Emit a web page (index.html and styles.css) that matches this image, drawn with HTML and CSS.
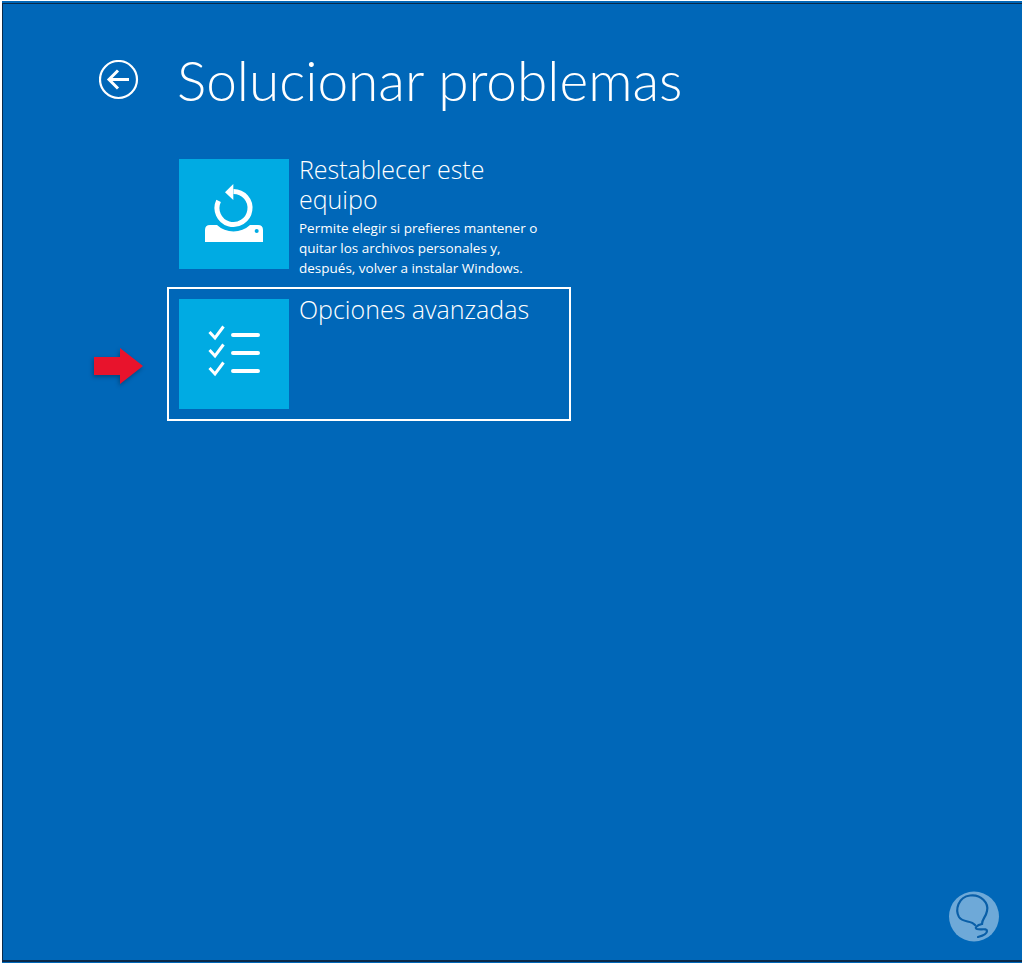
FILE: index.html
```
<!DOCTYPE html>
<html lang="es">
<head>
<meta charset="utf-8">
<title>Solucionar problemas</title>
<link rel="stylesheet" href="styles.css">
</head>
<body>
<main class="screen">
  <header class="head">
    <svg class="back" width="40" height="40" viewBox="0 0 40 40" fill="none" stroke="#fff">
      <circle cx="19.5" cy="19.5" r="18.5" stroke-width="2.2"/>
      <path d="M10 19.5H30M19 10.5L10 19.5L19 28.5" stroke-width="3"/>
    </svg>
    <h1 class="title">Solucionar problemas</h1>
  </header>
  <section class="tiles">
    <div class="option">
      <div class="tile">
        <svg width="110" height="110" viewBox="0 0 110 110">
          <path d="M26 71Q26 66 31 66H38A24 24 0 0 0 71 66H79Q84 66 84 71V83H26Z" fill="#fff"/>
          <circle cx="77.700" cy="72" r="2" fill="#00abe3"/>
          <path d="M54.500 32.500A16.500 16.500 0 1 1 39.600 41.900" fill="none" stroke="#fff" stroke-width="5"/>
          <path d="M54.300 25V41L46 33.300Z" fill="#fff"/>
        </svg>
      </div>
      <div class="text">
        <h2 class="name">Restablecer este equipo</h2>
        <p class="desc">Permite elegir si prefieres mantener o quitar los archivos personales y, después, volver a instalar Windows.</p>
      </div>
    </div>
    <div class="option focused">
      <div class="tile">
        <svg width="110" height="110" viewBox="0 0 110 110" fill="none" stroke="#fff">
          <path d="M30.500 33L36 39L44.500 27.500M30.500 51L36 57L44.500 45.500M30.500 69L36 75L44.500 63.500" stroke-width="3"/>
          <path d="M54 36H79M54 54H79M54 72H79" stroke-width="4" stroke-linecap="round"/>
        </svg>
      </div>
      <div class="text">
        <h2 class="name">Opciones avanzadas</h2>
      </div>
    </div>
  </section>
  <svg class="arrow" width="54" height="38" viewBox="0 0 54 38">
    <path d="M1 10H27V1L50 19L27 37V28H1Z" fill="#e8132c"/>
  </svg>
  <svg class="logo" width="52" height="52" viewBox="0 0 52 52">
    <circle cx="25" cy="25.500" r="25" fill="#6ea9d8"/>
    <path d="M26 34C22 29 14 32 10 26C6 19 9 6 21 4.500C32 3 40 12 38 20C37 26 33 28 33 33C28 34 25 37 28 38C32 39 38 37 38 40C38 43 33 45 29 46" fill="none" stroke="#0a5fa8" stroke-width="2.200" stroke-linecap="round"/>
  </svg>
</main>
</body>
</html>
```
FILE: styles.css
```
* { box-sizing: border-box; }
html, body { margin: 0; padding: 0; height: 100%; }
body { background: #fff; overflow: hidden; }
.screen {
  position: relative;
  width: 1022px;
  height: 962px;
  margin-top: 1px;
  background: #0067b8;
  border-left: 2px solid #fff;
  font-family: "Open Sans", "Liberation Sans", sans-serif;
  color: #fff;
}
.screen::before {
  content: "";
  position: absolute;
  left: 0;
  right: 0;
  top: 2px;
  bottom: 1px;
  border: solid #0a2a4a;
  border-width: 1px 0 2px 1px;
  pointer-events: none;
}
.head {
  display: flex;
  align-items: center;
  height: 158px;
  padding-left: 97px;
}
.back { flex: none; }
.title {
  margin: 0 0 0 38px;
  font-family: "Lato", "Open Sans", sans-serif;
  font-size: 55px;
  font-weight: 300;
  line-height: 60px;
  white-space: nowrap;
}
.tiles {
  display: flex;
  flex-direction: column;
  gap: 18px;
  padding-left: 165px;
}
.option {
  display: flex;
  width: 404px;
  height: 134px;
  padding: 10px;
  gap: 10px;
  border: 2px solid transparent;
}
.tiles .option:first-child { margin-top: -12px; margin-bottom: -12px; }
.focused { border-color: #fff; }
.tile { flex: none; width: 110px; height: 110px; background: #00abe3; }
.tile svg { display: block; }
.text { width: 245px; flex: none; }
.name {
  margin: -5px 0 0;
  font-size: 25px;
  font-weight: 300;
  line-height: 30px;
}
.desc {
  margin: 4px 0 0;
  font-size: 13.5px;
  font-weight: 400;
  line-height: 20px;
}
.arrow { position: absolute; left: 91px; top: 346px; filter: drop-shadow(-1px 2px 2px rgba(0, 0, 0, .3)); }
.logo { position: absolute; left: 947px; top: 890px; }
```
